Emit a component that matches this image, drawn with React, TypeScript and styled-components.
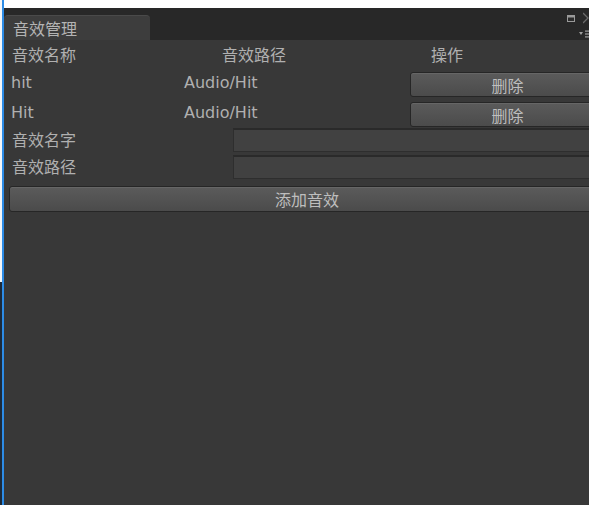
import React from "react";
import styled, { createGlobalStyle } from "styled-components";

const Global = createGlobalStyle`
  html, body { margin: 0; padding: 0; background: #ffffff; overflow: hidden; }
  body { font-family: "DejaVu Sans", "Noto Sans CJK SC", sans-serif; }
`;

const Page = styled.div`
  display: flex;
  width: 589px;
  height: 505px;
  overflow: hidden;
`;

const Edge = styled.div`
  width: 2px;
  flex: none;
  display: flex;
  flex-direction: column;
`;

const EdgeTop = styled.div`
  height: 282px;
  background: #f4f6f8;
`;

const EdgeBottom = styled.div`
  flex: 1;
  background: #1c2a3a;
`;

const BlueBar = styled.div`
  width: 2px;
  flex: none;
  background: #2d8ce6;
`;

const Window = styled.div`
  flex: 1;
  min-width: 0;
  display: flex;
  flex-direction: column;
  padding-top: 8px;
  background: linear-gradient(#ffffff 0 8px, #383838 8px);
  overflow: hidden;
`;

const TabBar = styled.div`
  height: 32px;
  flex: none;
  display: flex;
  align-items: flex-end;
  background: #282828;
  padding-left: 0;
  position: relative;
`;

const Tab = styled.div`
  width: 146px;
  height: 25px;
  box-sizing: border-box;
  background: #3d3d3d;
  border-radius: 4px 4px 0 0;
  border-top: 1px solid #4a4a4a;
  color: #b4b4b4;
  font-size: 16px;
  font-family: "Noto Sans CJK SC", sans-serif;
  line-height: 24px;
  padding-left: 9px;
`;

const WinButtons = styled.div`
  position: absolute;
  right: 0;
  top: 4px;
  display: flex;
  flex-direction: column;
  align-items: flex-end;
  gap: 6px;
`;

const IconLine = styled.div`
  display: flex;
  align-items: center;
  gap: 8px;
`;

const Content = styled.div`
  display: flex;
  flex-direction: column;
  margin-right: -16px;
`;

const Row = styled.div<{ $cols: string; $pl: number; $h: number; $mt: number }>`
  display: grid;
  grid-template-columns: ${(p) => p.$cols};
  padding-left: ${(p) => p.$pl}px;
  height: ${(p) => p.$h}px;
  margin-top: ${(p) => p.$mt}px;
  align-items: center;
`;

const Label = styled.div<{ $dy?: number; $cjk?: boolean }>`
  color: #b0b0b0;
  font-size: 16px;
  font-family: ${(p) =>
    p.$cjk ? '"Noto Sans CJK SC", sans-serif' : '"DejaVu Sans", "Noto Sans CJK SC", sans-serif'};
  white-space: nowrap;
  position: relative;
  top: ${(p) => p.$dy ?? 0}px;
`;

const Button = styled.button<{ $h: number }>`
  height: ${(p) => p.$h}px;
  box-sizing: border-box;
  border: 1px solid #262626;
  border-radius: 3px;
  background: linear-gradient(#5b5b5b, #4b4b4b);
  box-shadow: inset 0 1px 0 #666666;
  color: #bebebe;
  font-size: 16px;
  font-family: "Noto Sans CJK SC", sans-serif;
  padding: 0;
  line-height: 1;
  cursor: pointer;
`;

const Input = styled.div`
  height: 24px;
  box-sizing: border-box;
  background: #414141;
  border: 1px solid #2e2e2e;
  border-top: 2px solid #2a2a2a;
`;

const FieldRow = styled.div<{ $mt: number }>`
  display: grid;
  grid-template-columns: 221px 1fr;
  padding-left: 8px;
  height: 24px;
  margin-top: ${(p) => p.$mt}px;
  align-items: center;
`;

const AddWrap = styled.div`
  padding-left: 5px;
  margin-top: 7px;
  display: flex;
  flex-direction: column;
`;

const sounds = [
  { name: "hit", path: "Audio/Hit" },
  { name: "Hit", path: "Audio/Hit" },
];

export default function App() {
  return (
    <>
      <Global />
      <Page>
        <Edge>
          <EdgeTop />
          <EdgeBottom />
        </Edge>
        <BlueBar />
        <Window>
          <TabBar>
            <Tab>音效管理</Tab>
            <WinButtons>
              <IconLine>
                <svg width="8" height="7" viewBox="0 0 8 7">
                  <rect x="0.5" y="0.5" width="7" height="6" fill="#2c2c2c" stroke="#9a9a9a" />
                  <rect x="1" y="1" width="6" height="1.5" fill="#9a9a9a" />
                </svg>
                <svg width="6" height="12" viewBox="0 0 6 12">
                  <path d="M0 1 L5 6 L0 11" fill="none" stroke="#6a6a6a" strokeWidth="1.3" />
                </svg>
              </IconLine>
              <svg width="10" height="8" viewBox="0 0 10 8">
                <path d="M0 2 L4 2 L2 5 Z" fill="#a0a0a0" />
                <rect x="6" y="0.5" width="4" height="1.2" fill="#a0a0a0" />
                <rect x="6" y="3.4" width="4" height="1.2" fill="#a0a0a0" />
                <rect x="6" y="6.3" width="4" height="1.2" fill="#a0a0a0" />
              </svg>
            </WinButtons>
          </TabBar>
          <Content>
            <Row $cols="210px 209px 1fr" $pl={8} $h={26} $mt={1}>
              <Label $cjk>音效名称</Label>
              <Label $cjk>音效路径</Label>
              <Label $cjk>操作</Label>
            </Row>
            {sounds.map((s, i) => (
              <Row key={i} $cols="173px 226px 1fr" $pl={7} $h={25} $mt={5}>
                <Label $dy={-2}>{s.name}</Label>
                <Label $dy={-2}>{s.path}</Label>
                <Button $h={25}>删除</Button>
              </Row>
            ))}
            <FieldRow $mt={1}>
              <Label $cjk $dy={-1}>音效名字</Label>
              <Input />
            </FieldRow>
            <FieldRow $mt={3}>
              <Label $cjk $dy={-1}>音效路径</Label>
              <Input />
            </FieldRow>
            <AddWrap>
              <Button $h={26}>添加音效</Button>
            </AddWrap>
          </Content>
        </Window>
      </Page>
    </>
  );
}
